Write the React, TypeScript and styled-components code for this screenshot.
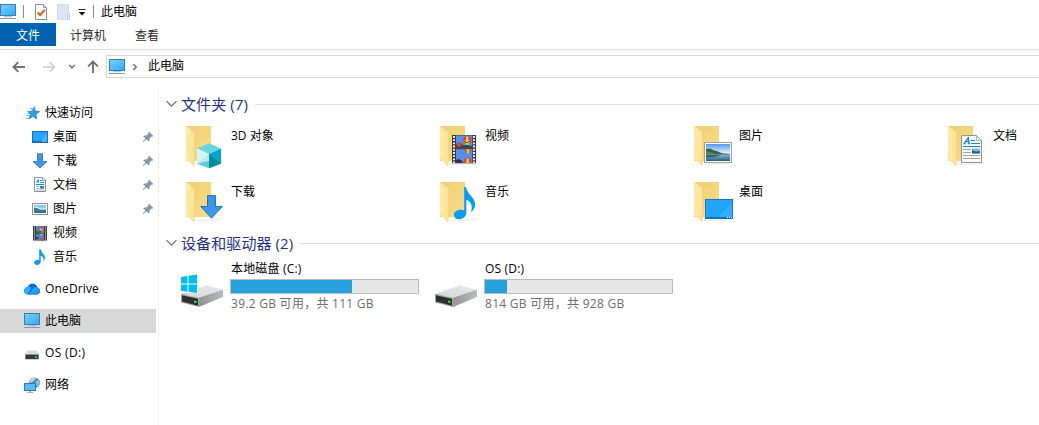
import React from "react";
import styled, { createGlobalStyle } from "styled-components";

const GlobalStyle = createGlobalStyle`
  * { box-sizing: border-box; }
  html, body { margin: 0; padding: 0; background: #fff; }
  body {
    font-family: "Open Sans", "Noto Sans CJK SC", sans-serif;
    font-size: 12px;
    line-height: 16px;
    color: #000;
    overflow: hidden;
  }
  svg { display: block; flex: none; }
`;

const Window = styled.div`
  width: 1039px;
  height: 425px;
  display: flex;
  flex-direction: column;
  overflow: hidden;
  white-space: nowrap;
`;

const TitleBar = styled.header`
  height: 23px;
  display: flex;
  align-items: center;
`;

const Separator = styled.span<{ $before: number; $after: number }>`
  width: 1px;
  height: 13px;
  margin: 0 ${(p) => p.$after}px 0 ${(p) => p.$before}px;
  background: #8c8c8c;
`;

const QuickButton = styled.span<{ $gap: number }>`
  margin-right: ${(p) => p.$gap}px;
`;

const TabBar = styled.nav`
  height: 27px;
  display: flex;
  align-items: flex-start;
  border-bottom: 1px solid #dadbdc;
`;

const Tab = styled.div<{ $active?: boolean; $width: number }>`
  width: ${(p) => p.$width}px;
  height: 23px;
  line-height: 26px;
  text-align: center;
  background: ${(p) => (p.$active ? "#0063b1" : "transparent")};
  color: ${(p) => (p.$active ? "#fff" : "#2b2b2b")};
`;

const AddressRow = styled.div`
  height: 36px;
  padding: 5px 0 0 12px;
  display: flex;
  align-items: flex-start;
`;

const NavButtons = styled.div`
  width: 94px;
  height: 23px;
  display: flex;
  align-items: center;
`;

const AddressBox = styled.div`
  flex: 1;
  height: 23px;
  padding-left: 2px;
  display: flex;
  align-items: center;
  border: 1px solid #d9d9d9;
  border-right: 0;
`;

const AddressText = styled.span`
  margin: -1px 0 0 9px;
`;

const Body = styled.div`
  flex: 1;
  display: flex;
`;

const Sidebar = styled.aside`
  width: 159px;
  padding-top: 15px;
  border-right: 1px solid #f2f2f2;
`;

const NavGroup = styled.div`
  margin-bottom: 8px;
`;

const NavItem = styled.div<{ $child?: boolean; $selected?: boolean }>`
  width: 156px;
  height: 24px;
  padding: 0 2px 0 ${(p) => (p.$child ? 32 : 24)}px;
  display: flex;
  align-items: center;
  gap: 5px;
  background: ${(p) => (p.$selected ? "#d9d9d9" : "transparent")};
`;

const NavLabel = styled.span<{ $spacing?: number }>`
  flex: 1;
  letter-spacing: ${(p) => p.$spacing ?? 0}px;
  padding-bottom: 1px;
`;

const Content = styled.main`
  flex: 1;
  padding: 7px 0 0 7px;
  overflow: hidden;
`;

const GroupHeader = styled.div`
  height: 22px;
  display: flex;
  align-items: center;
`;

const GroupTitle = styled.h2`
  margin: 0 7px 0 4px;
  padding-bottom: 1px;
  font-size: 15px;
  line-height: 20px;
  font-weight: 400;
  letter-spacing: 0.1px;
  color: #1e3287;
`;

const GroupRule = styled.span`
  flex: 1;
  height: 1px;
  background: #e2e2e2;
`;

const TileGrid = styled.div<{ $top: number; $bottom?: number }>`
  display: grid;
  grid-template-columns: repeat(4, 254px);
  grid-auto-rows: 48px;
  row-gap: 8px;
  padding: ${(p) => p.$top}px 0 ${(p) => p.$bottom ?? 0}px 14px;
`;

const Tile = styled.div`
  display: flex;
  align-items: flex-start;
`;

const TileLabel = styled.span`
  margin: 6px 0 0 3px;
`;

const DriveInfo = styled.div`
  width: 189px;
  margin: -3px 0 0 2px;
`;

const DriveName = styled.div`
  padding-left: 1px;
  height: 18px;
  letter-spacing: 0.18px;
`;

const Meter = styled.div`
  height: 15px;
  border: 1px solid #bcbcbc;
  background: #e6e6e6;
`;

const MeterFill = styled.div<{ $width: number }>`
  width: ${(p) => p.$width}px;
  height: 13px;
  background: #26a0da;
`;

const DriveSpace = styled.div`
  padding: 2px 0 0 1px;
  letter-spacing: 0.27px;
  color: #6d6d6d;
`;

const PcIcon = () => (
  <svg width="16" height="16" viewBox="0 0 16 16">
    <defs>
      <linearGradient id="screen" x1="0" y1="0" x2="1" y2="1">
        <stop offset="0" stopColor="#7ccdfb" />
        <stop offset="0.5" stopColor="#56bdfc" />
        <stop offset="1" stopColor="#2ea5f5" />
      </linearGradient>
    </defs>
    <rect x="0.5" y="0.5" width="15" height="11" fill="url(#screen)" stroke="#3a7fa8" />
    <rect x="4" y="12.2" width="8" height="1" fill="#9db6c8" />
    <rect x="0" y="14" width="16" height="1" fill="#7f9fb9" />
  </svg>
);

const PropertiesIcon = () => (
  <svg width="12" height="16" viewBox="0 0 12 16">
    <path d="M0.5 0.5H8.5L11.5 3.5V15.5H0.5Z" fill="#fcfcfc" stroke="#8a8a8a" />
    <path d="M8.5 0.5V3.5H11.5" fill="#e6e6e6" stroke="#9a9a9a" />
    <path d="M2.5 8.5L5 11L9.7 5.8" fill="none" stroke="#e8581c" strokeWidth="1.9" />
  </svg>
);

const NewFolderIcon = () => (
  <svg width="13" height="16" viewBox="0 0 13 16">
    <path d="M0.5 0.5H11.5V9.5H12.5V15.5H0.5Z" fill="#dce6f5" stroke="#cfdaea" />
    <path d="M10.5 15V10.5L12.5 9.5V15.5" fill="#e9f0fa" stroke="#b9c8df" strokeWidth="0.8" />
  </svg>
);

const MoreIcon = () => (
  <svg width="8" height="8" viewBox="0 0 8 8">
    <rect x="0.5" y="1" width="7" height="1" fill="#222" />
    <path d="M0.7 4H7.3L4 7.4Z" fill="#111" />
  </svg>
);

const ArrowIcon = ({ color, turn = 0 }: { color: string; turn?: number }) => (
  <svg width="14" height="14" viewBox="0 0 14 14">
    <g transform={`rotate(${turn} 7 7)`} fill="none" stroke={color} strokeWidth="1.8">
      <path d="M1.6 7H13" />
      <path d="M6.3 2.1L1.5 7L6.3 11.9" />
    </g>
  </svg>
);

const SmallChevron = ({ right }: { right?: boolean }) => (
  <svg width="8" height="8" viewBox="0 0 8 8">
    <path
      d={right ? "M2.3 1.2L5.2 4L2.3 6.8" : "M1.2 2L4 4.8L6.8 2"}
      fill="none"
      stroke="#777"
      strokeWidth="1.6"
    />
  </svg>
);

const GroupChevron = () => (
  <svg width="11" height="8" viewBox="0 0 11 8">
    <path d="M0.5 1.2L5.5 6.2L10.5 1.2" fill="none" stroke="#6b6b6b" strokeWidth="1.2" />
  </svg>
);

const PinIcon = () => (
  <svg width="12" height="12" viewBox="0 0 12 12" fill="#8796a1">
    <path d="M7 0.7L11.4 4.9L10.4 5.6L9.4 5.5L7.6 7.4L7.5 9.6L6.6 10.5L4.3 8.2L0.8 11.4L0.5 11L3.4 7.4L1.4 5.3L2.2 4.4L4.5 4.4L6.4 2.6L6.2 1.5Z" />
  </svg>
);

const StarIcon = () => (
  <svg width="16" height="16" viewBox="0 0 16 16">
    <path d="M10.4 1.7L11.1 6L15.8 6.6L12 9.2L12.6 14L9.1 11.4L5 14L6.5 9.5L4 6.6L8 6Z" fill="#2f9fe6" stroke="#2581bd" strokeWidth="0.7" />
    <path d="M6 3.5H8.5M3 6.5H5M3.5 8.5H6M2.5 10.5H5.5M2 13.5H5" stroke="#5aaee0" strokeWidth="0.9" />
  </svg>
);

const DesktopIcon = () => (
  <svg width="16" height="16" viewBox="0 0 16 16">
    <rect x="0.5" y="2.5" width="15" height="11" fill="#2aa4fb" stroke="#1173b4" />
    <path d="M9 12L15 5V12Z" fill="#4db5ff" />
    <rect x="1" y="12" width="14" height="1" fill="#0f73b6" />
    <path d="M10.5 12.5H14.5" stroke="#cdeaff" strokeWidth="0.8" strokeDasharray="1 0.7" />
  </svg>
);

const DownloadIcon = () => (
  <svg width="16" height="16" viewBox="0 0 16 16">
    <path d="M5.5 0.8H10.5V8.5H15L8 15L1 8.5H5.5Z" fill="#3f97e6" stroke="#2b77bd" strokeWidth="0.9" />
  </svg>
);

const DocumentIcon = () => (
  <svg width="16" height="16" viewBox="0 0 16 16">
    <path d="M2.5 0.5H11L13.5 3V14.5H2.5Z" fill="#fff" stroke="#8a9196" />
    <path d="M10.5 0.5V3.5H13.5" fill="none" stroke="#8a9196" strokeWidth="0.8" />
    <path d="M4 5.8L6.2 2.4L6.7 5.8M5 4.6H7" fill="none" stroke="#1d8bd0" strokeWidth="0.9" />
    <path d="M8 3.5H10M8 5.5H12M4 7.5H12" fill="none" stroke="#1d8bd0" />
    <path d="M4 9.5H7M4 11.5H7M4 13H12" stroke="#8db3c9" strokeWidth="0.9" />
    <rect x="8" y="9" width="4" height="2.7" fill="#3c85af" />
  </svg>
);

const PictureIcon = () => (
  <svg width="16" height="16" viewBox="0 0 16 16">
    <rect x="0.5" y="2.5" width="15" height="11" fill="#fff" stroke="#8c9297" />
    <rect x="2" y="4" width="12" height="8" fill="#8fc4f5" />
    <path d="M2 6L5 5.5L9 7.5L14 7V9H2Z" fill="#dcecf6" />
    <path d="M2 6.5L5 7.2L9 8.7L14 8.4V9.5H2Z" fill="#3d7565" />
    <rect x="2" y="9.3" width="12" height="2.7" fill="#3a6f9c" />
  </svg>
);

const VideoIcon = () => (
  <svg width="16" height="16" viewBox="0 0 16 16">
    <rect x="1" y="1" width="14" height="14.5" fill="#3b3b3b" />
    <path d="M2.5 1.5V15.5M13.5 1.5V15.5" stroke="#e8e8e8" strokeDasharray="1 1" />
    <rect x="4" y="1" width="8" height="7" fill="#4b83df" />
    <rect x="4" y="8.8" width="8" height="6.7" fill="#4b83df" />
    <circle cx="9.2" cy="3.7" r="2.2" fill="#e0452f" />
    <path d="M7.3 3.6H11L10 5.5H8.2Z" fill="#f4c531" />
    <rect x="4" y="6" width="5" height="2" fill="#36702e" />
    <path d="M7.5 8.8H11L9.3 11Z" fill="#f0b428" />
    <path d="M8 15.5C8 12.5 12 12.5 12 14.5V15.5Z" fill="#d84235" />
    <rect x="4" y="12.2" width="2.5" height="2" fill="#2c3b63" />
  </svg>
);

const MusicIcon = () => (
  <svg width="16" height="16" viewBox="0 0 16 16">
    <path d="M7.2 0.3H8.7C9.1 4.2 13.3 5.3 12.9 9.2C12.8 10.7 12.2 11.5 11.4 12.2C12 9.5 11.4 7.6 8.7 6.7V12.8C8.7 16.8 2 17 2.1 13.4C2.2 11 5.1 10.4 7.2 11.3Z" fill="#0b9bf0" />
  </svg>
);

const CloudIcon = () => (
  <svg width="16" height="16" viewBox="0 0 16 16">
    <defs>
      <linearGradient id="cloudBack" x1="0" y1="0" x2="1" y2="1">
        <stop offset="0" stopColor="#1679e0" />
        <stop offset="1" stopColor="#0a55c5" />
      </linearGradient>
      <linearGradient id="cloudFront" x1="0" y1="0" x2="1" y2="1">
        <stop offset="0" stopColor="#31b9fb" />
        <stop offset="1" stopColor="#1283ef" />
      </linearGradient>
    </defs>
    <path d="M4 13.5C1.5 13.5 0 11.8 0 9.8C0 7.6 1.7 6 3.6 5.9C4.6 3.7 6.5 2.4 8.6 2.5C11 2.6 13 4.3 13.4 6.5C15 7 16 8.3 16 10C16 12 14.4 13.5 12.3 13.5Z" fill="url(#cloudBack)" />
    <path d="M0 9.8C0 7.6 1.7 6 3.6 5.9C5.5 5.3 6.9 6.1 7.5 7L3.2 13.4C1.2 13.2 0 11.6 0 9.8Z" fill="#31b0f5" />
    <path d="M4.2 13.5L9.3 7.5C10.5 6.3 12 6.2 13.4 6.5C15 7 16 8.3 16 10C16 12 14.4 13.5 12.3 13.5Z" fill="url(#cloudFront)" />
  </svg>
);

const SmallDriveIcon = () => (
  <svg width="16" height="16" viewBox="0 0 16 16">
    <path d="M3.5 5.5H12.5L15 9.5H1Z" fill="#d9dbdd" />
    <rect x="1" y="9" width="14" height="5.5" rx="0.5" fill="#a5a7a8" />
    <rect x="1.7" y="9.8" width="12.6" height="4.2" fill="#353738" />
    <rect x="11" y="11.5" width="2" height="1.3" fill="#45df57" />
  </svg>
);

const NetworkIcon = () => (
  <svg width="16" height="16" viewBox="0 0 16 16">
    <circle cx="10.5" cy="5.8" r="5.4" fill="#4c91b8" />
    <path d="M6 3.6C8 1 10.5 0.6 12 1L10.5 3.2L8 4.8L6.5 6.5Z" fill="#b9dcea" />
    <path d="M12 4L15 3.2L15.7 6.5L13.5 9.8L12 7Z" fill="#8bc1d8" />
    <rect x="0.5" y="6.5" width="11" height="7" fill="#56bdfc" stroke="#327da7" />
    <rect x="5" y="14" width="2" height="1" fill="#9db6c8" />
    <rect x="3" y="15" width="6" height="1" fill="#9db6c8" />
  </svg>
);

const FolderFrame = ({ children }: { children: React.ReactNode }) => (
  <svg width="48" height="48" viewBox="0 0 48 48">
    <defs>
      <linearGradient id="folderBack" x1="0" y1="0" x2="1" y2="1">
        <stop offset="0" stopColor="#f0cf70" />
        <stop offset="1" stopColor="#f8dc8d" />
      </linearGradient>
      <linearGradient id="folderFlap" x1="0" y1="0" x2="1" y2="0.3">
        <stop offset="0" stopColor="#ffebaa" />
        <stop offset="1" stopColor="#fde196" />
      </linearGradient>
    </defs>
    <path d="M14 42L44 40L40 43H14Z" fill="#f2f2f2" />
    <path d="M6 4H31V39H6Z" fill="url(#folderBack)" />
    <path d="M6 4L14.8 10.5V37L13.6 44L6 36.5Z" fill="url(#folderFlap)" />
    <path d="M14.8 10.5V37L13.6 44" fill="none" stroke="#edca70" strokeWidth="0.5" />
    {children}
  </svg>
);

const ObjectsFolder = () => (
  <FolderFrame>
    <path d="M29 21.3L41 26.5L29 32L17 26.5Z" fill="#69d5e3" />
    <path d="M17 26.5L29 32V46.3L17 41.5Z" fill="#b9edf4" />
    <path d="M17 26.5L29 32L17 41.5Z" fill="#d3f5f8" />
    <path d="M29 32L41 26.5V41.5L29 46.3Z" fill="#00a5d2" />
    <path d="M29 32L41 41.5L29 46.3Z" fill="#078c9f" />
    <path d="M17 41.5L29 39V46.3Z" fill="#5ccddb" />
  </FolderFrame>
);

const balloon = (cx: number, cy: number) => (
  <g>
    <ellipse cx={cx} cy={cy} rx="4" ry="4" fill="#dc3d32" />
    <path d={`M${cx - 3.8} ${cy}H${cx + 3.8}L${cx + 1} ${cy + 4.6}H${cx - 1}Z`} fill="#f1b72c" />
    <path d={`M${cx - 1.2} ${cy - 3.8}H${cx + 1.2}V${cy + 4}H${cx - 1.2}Z`} fill="#f5d346" />
    <path d={`M${cx - 3.5} ${cy + 0.5}L${cx} ${cy + 2.5}L${cx + 3.5} ${cy + 0.5}`} fill="none" stroke="#5a3570" />
    <rect x={cx - 1} y={cy + 4.8} width="2" height="1.4" fill="#3b2820" />
  </g>
);

const VideoFolder = () => (
  <FolderFrame>
    <rect x="18" y="13" width="24" height="28.3" fill="#3c3c3c" />
    <path d="M20 14V41M40 14V41" stroke="#e9e9e9" strokeWidth="2" strokeDasharray="1.9 1.3" />
    <rect x="22" y="13.5" width="16.3" height="12.6" fill="#5b8fe5" />
    <rect x="22" y="27.2" width="16.3" height="13.6" fill="#5b8fe5" />
    <path d="M22 22.5C24 20 27 20 29 23L38.3 24V26.1H22Z" fill="#314d45" />
    <ellipse cx="25" cy="22.7" rx="2.5" ry="2" fill="#dd453a" />
    {balloon(33.2, 18.3)}
    <path d="M30 27.2H38L35 31H33Z" fill="#db4a38" />
    <path d="M32.5 27.2H35.5L34.7 31.5H33.3Z" fill="#f4c93a" />
    <path d="M29.5 40.8C29.5 33.8 37.8 33.8 37.8 40.8Z" fill="#d94337" />
    <path d="M32 40.8C32 34.5 35.3 34.5 35.3 40.8Z" fill="#f3ca39" />
    <path d="M22 38.3C23 36.8 26 37 28 39L29 40.8H22Z" fill="#302f36" />
  </FolderFrame>
);

const PictureFolder = () => (
  <FolderFrame>
    <defs>
      <linearGradient id="sky" x1="0" y1="0" x2="0" y2="1">
        <stop offset="0" stopColor="#5599ee" />
        <stop offset="1" stopColor="#edf7fc" />
      </linearGradient>
      <linearGradient id="lake" x1="0" y1="0" x2="0" y2="1">
        <stop offset="0" stopColor="#8eb9c8" />
        <stop offset="1" stopColor="#26608d" />
      </linearGradient>
    </defs>
    <rect x="16.5" y="20.5" width="27" height="20" fill="#fff" stroke="#a1a1a1" />
    <rect x="18" y="22" width="24" height="10" fill="url(#sky)" />
    <path d="M18 27L22 26.5L25 28L30 29.5L34 31.2L42 32V33H18Z" fill="#36634b" />
    <path d="M18 29L23 30L28 32.5H18Z" fill="#5b8052" />
    <rect x="18" y="32.5" width="24" height="6.5" fill="url(#lake)" />
    <path d="M18 33H33L25 35.2L18 35.6Z" fill="#356268" />
  </FolderFrame>
);

const DocumentFolder = () => (
  <FolderFrame>
    <path d="M19.5 13.5H34.5L39.5 18.5V40.5H19.5Z" fill="#fafafa" stroke="#8f9498" />
    <path d="M34.5 13.5V18.5H39.5Z" fill="#ebebeb" stroke="#a0a4a7" strokeWidth="0.8" />
    <path d="M22 21.7L26.3 15.7L27.2 21.7M23.3 19.7H27M21.5 21.7H23.5M25.8 21.7H28" fill="none" stroke="#1683c7" strokeWidth="1.2" />
    <path d="M29 18.5H33M29 21.5H38M21 24.5H38" stroke="#1787ca" strokeWidth="1.1" />
    <path d="M21 27.5H29M21 30.5H29M21 33.5H38M21 36.5H38" stroke="#a4a7a9" />
    <rect x="30" y="26.5" width="8" height="5" fill="#87b9e1" />
    <path d="M30 28L34 29.5L38 29V31.5H30Z" fill="#34617a" />
  </FolderFrame>
);

const DownloadFolder = () => (
  <FolderFrame>
    <path d="M27.5 17.5H35.5V28.5H42.3L31.5 40.2L20.7 28.5H27.5Z" fill="#3a96e8" stroke="#2376bb" />
  </FolderFrame>
);

const MusicFolder = () => (
  <FolderFrame>
    <path d="M30.2 9H32C33 17 41.5 19 41.2 27C41 30 39.5 32.5 36.8 34C38.5 30 38.4 24 32.4 21.7V34.3C32.4 42.8 19.8 43.6 20 36.8C20.2 32.2 26 30.8 30.2 32.2Z" fill="#0b9bf4" />
  </FolderFrame>
);

const DesktopFolder = () => (
  <FolderFrame>
    <rect x="17.5" y="21.5" width="27" height="19" fill="#22a3fc" stroke="#1479b8" />
    <path d="M30 39L44 25V39Z" fill="#36adff" />
    <rect x="18" y="39" width="26" height="1" fill="#1172ad" />
    <path d="M39 39.5H44" stroke="#fff" strokeDasharray="1 1" />
  </FolderFrame>
);

const DriveIcon = ({ system }: { system?: boolean }) => (
  <svg width="48" height="48" viewBox="0 0 48 48">
    <defs>
      <linearGradient id="driveTop" x1="0" y1="1" x2="1" y2="0">
        <stop offset="0" stopColor="#d3d5d7" />
        <stop offset="1" stopColor="#e9eaeb" />
      </linearGradient>
      <linearGradient id="driveSide" x1="0" y1="0" x2="1" y2="0">
        <stop offset="0" stopColor="#929496" />
        <stop offset="1" stopColor="#b8babc" />
      </linearGradient>
    </defs>
    <path d="M1 30L25.5 21.4Q26.3 21.2 27 21.4L43 25.7L19 34Z" fill="url(#driveTop)" />
    <path d="M19 33.7L43 25.7V33L19 43Z" fill="url(#driveSide)" />
    <path d="M1 29.7L19 33.7V43L1 38.5Z" fill="#a4a6a8" />
    <path d="M2 31.2L18 34.8V41.7L2 37.6Z" fill="#2d2e2f" />
    <path d="M14 36.5L16.5 37.1V39.3L14 38.7Z" fill="#2fd83c" />
    {system && (
      <>
        <path d="M0.5 10.5H18V28.8H0.5Z" fill="#fff" />
        <path d="M1 13L7.5 12V19.4H1ZM8.5 11.8L17 10.6V19.4H8.5ZM1 20.4H7.5V27.7L1 26.8ZM8.5 20.4H17V29L8.5 27.8Z" fill="#00bcf2" />
      </>
    )}
  </svg>
);

const quickItems = [
  { label: "桌面", Icon: DesktopIcon, pinned: true },
  { label: "下载", Icon: DownloadIcon, pinned: true },
  { label: "文档", Icon: DocumentIcon, pinned: true },
  { label: "图片", Icon: PictureIcon, pinned: true },
  { label: "视频", Icon: VideoIcon, pinned: false },
  { label: "音乐", Icon: MusicIcon, pinned: false },
];

const rootItems = [
  { label: "OneDrive", Icon: CloudIcon, selected: false, spacing: 0.15 },
  { label: "此电脑", Icon: PcIcon, selected: true, spacing: 0 },
  { label: "OS (D:)", Icon: SmallDriveIcon, selected: false, spacing: 0.35 },
  { label: "网络", Icon: NetworkIcon, selected: false, spacing: 0 },
];

const folders = [
  { label: "3D 对象", Icon: ObjectsFolder },
  { label: "视频", Icon: VideoFolder },
  { label: "图片", Icon: PictureFolder },
  { label: "文档", Icon: DocumentFolder },
  { label: "下载", Icon: DownloadFolder },
  { label: "音乐", Icon: MusicFolder },
  { label: "桌面", Icon: DesktopFolder },
];

const drives = [
  { name: "本地磁盘 (C:)", space: "39.2 GB 可用，共 111 GB", used: 121, system: true },
  { name: "OS (D:)", space: "814 GB 可用，共 928 GB", used: 22, system: false },
];

export default function App() {
  return (
    <Window>
      <GlobalStyle />
      <TitleBar>
        <PcIcon />
        <Separator $before={7} $after={11} />
        <QuickButton $gap={10}><PropertiesIcon /></QuickButton>
        <QuickButton $gap={8}><NewFolderIcon /></QuickButton>
        <MoreIcon />
        <Separator $before={7} $after={7} />
        <span>此电脑</span>
      </TitleBar>
      <TabBar>
        <Tab $active $width={56}>文件</Tab>
        <Tab $width={64}>计算机</Tab>
        <Tab $width={54}>查看</Tab>
      </TabBar>
      <AddressRow>
        <NavButtons>
          <QuickButton $gap={16}><ArrowIcon color="#6a6a6a" /></QuickButton>
          <QuickButton $gap={12}><ArrowIcon color="#d3d3d3" turn={180} /></QuickButton>
          <QuickButton $gap={10}><SmallChevron /></QuickButton>
          <ArrowIcon color="#6a6a6a" turn={90} />
        </NavButtons>
        <AddressBox>
          <QuickButton $gap={6}><PcIcon /></QuickButton>
          <SmallChevron right />
          <AddressText>此电脑</AddressText>
        </AddressBox>
      </AddressRow>
      <Body>
        <Sidebar>
          <NavGroup>
            <NavItem>
              <StarIcon />
              <NavLabel>快速访问</NavLabel>
            </NavItem>
            {quickItems.map(({ label, Icon, pinned }) => (
              <NavItem key={label} $child>
                <Icon />
                <NavLabel>{label}</NavLabel>
                {pinned && <PinIcon />}
              </NavItem>
            ))}
          </NavGroup>
          {rootItems.map(({ label, Icon, selected, spacing }) => (
            <NavGroup key={label}>
              <NavItem $selected={selected}>
                <Icon />
                <NavLabel $spacing={spacing}>{label}</NavLabel>
              </NavItem>
            </NavGroup>
          ))}
        </Sidebar>
        <Content>
          <GroupHeader>
            <GroupChevron />
            <GroupTitle>文件夹 (7)</GroupTitle>
            <GroupRule />
          </GroupHeader>
          <TileGrid $top={7} $bottom={6}>
            {folders.map(({ label, Icon }) => (
              <Tile key={label}>
                <Icon />
                <TileLabel>{label}</TileLabel>
              </Tile>
            ))}
          </TileGrid>
          <GroupHeader>
            <GroupChevron />
            <GroupTitle>设备和驱动器 (2)</GroupTitle>
            <GroupRule />
          </GroupHeader>
          <TileGrid $top={10}>
            {drives.map(({ name, space, used, system }) => (
              <Tile key={name}>
                <DriveIcon system={system} />
                <DriveInfo>
                  <DriveName>{name}</DriveName>
                  <Meter><MeterFill $width={used} /></Meter>
                  <DriveSpace>{space}</DriveSpace>
                </DriveInfo>
              </Tile>
            ))}
          </TileGrid>
        </Content>
      </Body>
    </Window>
  );
}
